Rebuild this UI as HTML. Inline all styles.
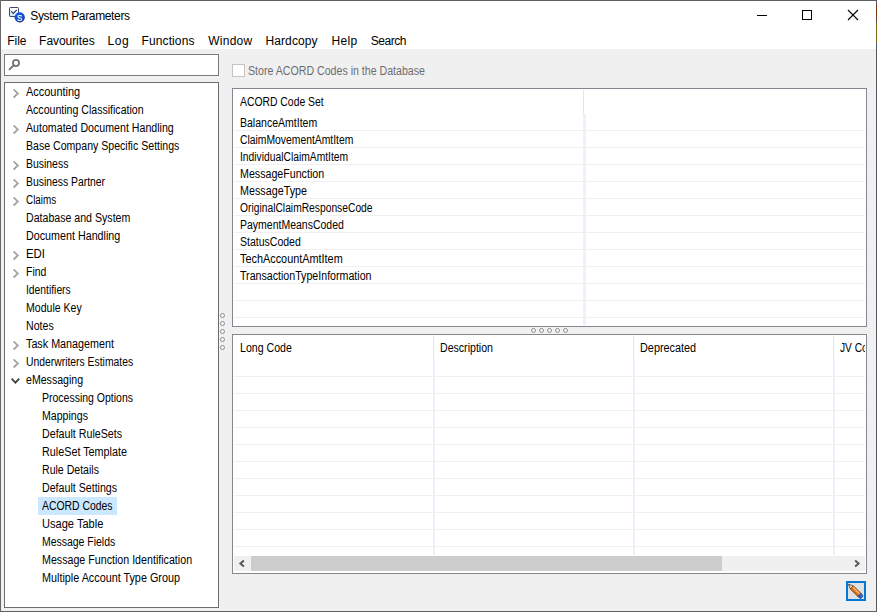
<!DOCTYPE html>
<html><head><meta charset="utf-8"><title>System Parameters</title>
<style>
html,body{margin:0;padding:0}
body{width:877px;height:612px;overflow:hidden;background:#f0f0f0;position:relative;font-family:"Liberation Sans",sans-serif;font-size:11px;color:#000}
div,span{position:absolute;box-sizing:border-box;white-space:nowrap}
svg{position:absolute;overflow:visible}
.t{font-size:12px;line-height:16px;height:16px}
.r{height:18px;line-height:18px;font-size:12px;transform-origin:0 0}
.g{height:17px;line-height:17px;font-size:12px;left:240px;transform-origin:0 0}
.hl{left:234px;width:631px;height:1px;background:#f0f0f0}
.dot{width:5px;height:5px;border:1px solid #8e8e8e;border-radius:50%;background:#f4f4f4}
</style></head><body>
<!-- window frame -->
<div style="left:0;top:0;width:877px;height:49px;background:#fff"></div>
<div style="left:0;top:0;width:877px;height:1px;background:#5e5e5e"></div>
<div style="left:0;top:0;width:1px;height:612px;background:#686868"></div>
<div style="left:876px;top:0;width:1px;height:612px;background:#54585e"></div>
<div style="left:0;top:611px;width:877px;height:1px;background:#606060"></div>
<div style="left:876px;top:4px;width:1px;height:17px;background:#7a3b10"></div>
<div style="left:876px;top:23px;width:1px;height:20px;background:#7d6a10"></div>

<svg style="left:9px;top:7px" width="16" height="16" viewBox="0 0 16 16">
<defs><linearGradient id="cg" x1="0" y1="1" x2="1" y2="0"><stop offset="0" stop-color="#c4e2f8"/><stop offset="0.7" stop-color="#ffffff"/></linearGradient>
<radialGradient id="bg" cx="0.4" cy="0.3" r="0.75"><stop offset="0" stop-color="#1a66e8"/><stop offset="0.7" stop-color="#0a49c8"/><stop offset="1" stop-color="#07276e"/></radialGradient></defs>
<rect x="0.5" y="0.5" width="9" height="9" rx="0.8" fill="url(#cg)" stroke="#36476a" stroke-width="1"/>
<path d="M2.2 4.4 L4.4 6.4 L7.8 2.9" fill="none" stroke="#2a3560" stroke-width="1.15"/>
<circle cx="10.7" cy="10.3" r="5.1" fill="url(#bg)"/>
<text transform="translate(10.75,13.6) scale(0.84,1)" text-anchor="middle" font-family="Liberation Sans, sans-serif" font-size="9.4" fill="#fff" stroke="#fff" stroke-width="0.15">S</text>
</svg>
<div class="t" style="left:30px;top:8px;letter-spacing:-0.350px;margin-left:0.30px">System Parameters</div>
<!-- caption buttons -->
<svg style="left:755px;top:8px" width="120" height="16" viewBox="0 0 120 16">
<path d="M2 7.5 H12" stroke="#000" stroke-width="1" fill="none"/>
<rect x="47.5" y="2.5" width="9" height="9" stroke="#000" stroke-width="1" fill="none"/>
<path d="M93 2 L103 12 M103 2 L93 12" stroke="#000" stroke-width="1.1" fill="none"/>
</svg>

<div class="t" style="left:8px;top:33px;letter-spacing:-0.083px;margin-left:-0.70px">File</div>
<div class="t" style="left:40px;top:33px;letter-spacing:-0.056px;margin-left:-0.90px">Favourites</div>
<div class="t" style="left:108px;top:33px;letter-spacing:0.625px;margin-left:-0.60px">Log</div>
<div class="t" style="left:142px;top:33px;letter-spacing:0.113px;margin-left:-0.50px">Functions</div>
<div class="t" style="left:208px;top:33px;letter-spacing:0.230px;margin-left:0.30px">Window</div>
<div class="t" style="left:266px;top:33px;letter-spacing:0.093px;margin-left:-0.50px">Hardcopy</div>
<div class="t" style="left:332px;top:33px;letter-spacing:0.350px;margin-left:-0.50px">Help</div>
<div class="t" style="left:371px;top:33px;letter-spacing:-0.470px;margin-left:-0.20px">Search</div>

<div style="left:4px;top:54px;width:215px;height:22px;background:#fff;border:1px solid #7a7a7a"></div>
<svg style="left:7px;top:57px" width="14" height="14" viewBox="0 0 14 14"><circle cx="9.0" cy="6.0" r="3.05" fill="none" stroke="#757575" stroke-width="1.8"/><path d="M6.8 8.2 L2.0 12.9" stroke="#757575" stroke-width="1.9" fill="none"/></svg>
<!-- tree -->
<div style="left:4px;top:82px;width:215px;height:526px;background:#fff;border:1px solid #6d6d6d"></div>

<svg style="left:12px;top:88px" width="8" height="10" viewBox="0 0 8 10"><path d="M1.6 1.4 L5.8 5.45 L1.6 9.5" fill="none" stroke="#a3a3a3" stroke-width="1.8"/></svg>
<div class="r" style="left:26px;top:83px;transform:scaleX(0.9111);margin-left:0.20px">Accounting</div>
<div class="r" style="left:26px;top:101px;transform:scaleX(0.8814);margin-left:0.20px">Accounting Classification</div>
<svg style="left:12px;top:124px" width="8" height="10" viewBox="0 0 8 10"><path d="M1.6 1.4 L5.8 5.45 L1.6 9.5" fill="none" stroke="#a3a3a3" stroke-width="1.8"/></svg>
<div class="r" style="left:26px;top:119px;transform:scaleX(0.8861);margin-left:0.20px">Automated Document Handling</div>
<div class="r" style="left:26px;top:137px;transform:scaleX(0.8812);margin-left:-0.38px">Base Company Specific Settings</div>
<svg style="left:12px;top:160px" width="8" height="10" viewBox="0 0 8 10"><path d="M1.6 1.4 L5.8 5.45 L1.6 9.5" fill="none" stroke="#a3a3a3" stroke-width="1.8"/></svg>
<div class="r" style="left:26px;top:155px;transform:scaleX(0.8698);margin-left:-0.37px">Business</div>
<svg style="left:12px;top:178px" width="8" height="10" viewBox="0 0 8 10"><path d="M1.6 1.4 L5.8 5.45 L1.6 9.5" fill="none" stroke="#a3a3a3" stroke-width="1.8"/></svg>
<div class="r" style="left:26px;top:173px;transform:scaleX(0.8654);margin-left:-0.37px">Business Partner</div>
<svg style="left:12px;top:196px" width="8" height="10" viewBox="0 0 8 10"><path d="M1.6 1.4 L5.8 5.45 L1.6 9.5" fill="none" stroke="#a3a3a3" stroke-width="1.8"/></svg>
<div class="r" style="left:26px;top:191px;transform:scaleX(0.8224);margin-left:-0.51px">Claims</div>
<div class="r" style="left:26px;top:209px;transform:scaleX(0.8834);margin-left:-0.38px">Database and System</div>
<div class="r" style="left:26px;top:227px;transform:scaleX(0.8945);margin-left:-0.39px">Document Handling</div>
<svg style="left:12px;top:250px" width="8" height="10" viewBox="0 0 8 10"><path d="M1.6 1.4 L5.8 5.45 L1.6 9.5" fill="none" stroke="#a3a3a3" stroke-width="1.8"/></svg>
<div class="r" style="left:26px;top:245px;transform:scaleX(0.9500);margin-left:-0.45px">EDI</div>
<svg style="left:12px;top:268px" width="8" height="10" viewBox="0 0 8 10"><path d="M1.6 1.4 L5.8 5.45 L1.6 9.5" fill="none" stroke="#a3a3a3" stroke-width="1.8"/></svg>
<div class="r" style="left:26px;top:263px;transform:scaleX(0.8698);margin-left:-0.37px">Find</div>
<div class="r" style="left:26px;top:281px;transform:scaleX(0.8594);margin-left:-0.36px">Identifiers</div>
<div class="r" style="left:26px;top:299px;transform:scaleX(0.8787);margin-left:-0.38px">Module Key</div>
<div class="r" style="left:26px;top:317px;transform:scaleX(0.8833);margin-left:-0.38px">Notes</div>
<svg style="left:12px;top:340px" width="8" height="10" viewBox="0 0 8 10"><path d="M1.6 1.4 L5.8 5.45 L1.6 9.5" fill="none" stroke="#a3a3a3" stroke-width="1.8"/></svg>
<div class="r" style="left:26px;top:335px;transform:scaleX(0.8972);margin-left:0.08px">Task Management</div>
<svg style="left:12px;top:358px" width="8" height="10" viewBox="0 0 8 10"><path d="M1.6 1.4 L5.8 5.45 L1.6 9.5" fill="none" stroke="#a3a3a3" stroke-width="1.8"/></svg>
<div class="r" style="left:26px;top:353px;transform:scaleX(0.8637);margin-left:-0.36px">Underwriters Estimates</div>
<svg style="left:10px;top:377px" width="11" height="8" viewBox="0 0 11 8"><path d="M1.6 1.6 L5.4 5.6 L9.2 1.6" fill="none" stroke="#404040" stroke-width="1.8"/></svg>
<div class="r" style="left:26px;top:371px;transform:scaleX(0.8819);margin-left:-0.44px">eMessaging</div>
<div class="r" style="left:42px;top:389px;transform:scaleX(0.8751);margin-left:-0.28px">Processing Options</div>
<div class="r" style="left:42px;top:407px;transform:scaleX(0.8832);margin-left:-0.38px">Mappings</div>
<div class="r" style="left:42px;top:425px;transform:scaleX(0.8893);margin-left:-0.39px">Default RuleSets</div>
<div class="r" style="left:42px;top:443px;transform:scaleX(0.8989);margin-left:-0.40px">RuleSet Template</div>
<div class="r" style="left:42px;top:461px;transform:scaleX(0.8806);margin-left:-0.38px">Rule Details</div>
<div class="r" style="left:42px;top:479px;transform:scaleX(0.8865);margin-left:-0.39px">Default Settings</div>
<div style="left:38px;top:497px;width:79px;height:18px;background:#cce8ff"></div>
<div class="r" style="left:42px;top:497px;transform:scaleX(0.8667);margin-left:0.20px">ACORD Codes</div>
<div class="r" style="left:42px;top:515px;transform:scaleX(0.9231);margin-left:-0.42px">Usage Table</div>
<div class="r" style="left:42px;top:533px;transform:scaleX(0.8715);margin-left:-0.37px">Message Fields</div>
<div class="r" style="left:42px;top:551px;transform:scaleX(0.8892);margin-left:-0.39px">Message Function Identification</div>
<div class="r" style="left:42px;top:569px;transform:scaleX(0.9002);margin-left:-0.40px">Multiple Account Type Group</div>
<div class="dot" style="left:220px;top:313px"></div>
<div class="dot" style="left:220px;top:321px"></div>
<div class="dot" style="left:220px;top:329px"></div>
<div class="dot" style="left:220px;top:337px"></div>
<div class="dot" style="left:220px;top:345px"></div>

<div style="left:232px;top:64px;width:13px;height:13px;border:1px solid #c4c4c4;background:#fff"></div>
<div class="r" style="left:248px;top:62px;color:#6d6d6d;transform:scaleX(0.8844);margin-left:-0.24px">Store ACORD Codes in the Database</div>
<!-- top grid -->
<div style="left:232px;top:88px;width:635px;height:239px;background:#fff;border:1px solid #828790"></div>
<div style="left:583px;top:90px;width:1px;height:24px;background:#e5e5e5"></div>
<div style="left:583px;top:114px;width:3px;height:211px;background:#ebf2fb"></div>
<div class="g" style="top:94px;transform:scaleX(0.8651);margin-left:0.20px">ACORD Code Set</div>

<div class="g" style="top:115px;transform:scaleX(0.8765);margin-left:-0.38px">BalanceAmtItem</div>
<div class="g" style="top:132px;transform:scaleX(0.8631);margin-left:-0.43px">ClaimMovementAmtItem</div>
<div class="g" style="top:149px;transform:scaleX(0.8579);margin-left:-0.36px">IndividualClaimAmtItem</div>
<div class="g" style="top:166px;transform:scaleX(0.8882);margin-left:-0.39px">MessageFunction</div>
<div class="g" style="top:183px;transform:scaleX(0.8969);margin-left:-0.40px">MessageType</div>
<div class="g" style="top:200px;transform:scaleX(0.8566);margin-left:-0.23px">OriginalClaimResponseCode</div>
<div class="g" style="top:217px;transform:scaleX(0.8744);margin-left:-0.37px">PaymentMeansCoded</div>
<div class="g" style="top:234px;transform:scaleX(0.8765);margin-left:-0.14px">StatusCoded</div>
<div class="g" style="top:251px;transform:scaleX(0.9060);margin-left:0.07px">TechAccountAmtItem</div>
<div class="g" style="top:268px;transform:scaleX(0.8869);margin-left:0.08px">TransactionTypeInformation</div>
<div class="hl" style="top:130px"></div>
<div class="hl" style="top:147px"></div>
<div class="hl" style="top:164px"></div>
<div class="hl" style="top:181px"></div>
<div class="hl" style="top:198px"></div>
<div class="hl" style="top:215px"></div>
<div class="hl" style="top:232px"></div>
<div class="hl" style="top:249px"></div>
<div class="hl" style="top:266px"></div>
<div class="hl" style="top:283px"></div>
<div class="hl" style="top:300px"></div>
<div class="hl" style="top:317px"></div>
<div class="dot" style="left:531px;top:328px"></div>
<div class="dot" style="left:539px;top:328px"></div>
<div class="dot" style="left:547px;top:328px"></div>
<div class="dot" style="left:555px;top:328px"></div>
<div class="dot" style="left:563px;top:328px"></div>

<div style="left:232px;top:334px;width:635px;height:240px;background:#fff;border:1px solid #828790"></div>

<div style="left:433px;top:336px;width:1px;height:24px;background:#e5e5e5"></div>
<div style="left:433px;top:360px;width:2px;height:195px;background:#e9f1fb"></div>
<div style="left:633px;top:336px;width:1px;height:24px;background:#e5e5e5"></div>
<div style="left:633px;top:360px;width:2px;height:195px;background:#e9f1fb"></div>
<div style="left:833px;top:336px;width:1px;height:24px;background:#e5e5e5"></div>
<div style="left:833px;top:360px;width:2px;height:195px;background:#e9f1fb"></div>
<div class="hl" style="top:376px"></div>
<div class="hl" style="top:393px"></div>
<div class="hl" style="top:410px"></div>
<div class="hl" style="top:427px"></div>
<div class="hl" style="top:444px"></div>
<div class="hl" style="top:461px"></div>
<div class="hl" style="top:478px"></div>
<div class="hl" style="top:495px"></div>
<div class="hl" style="top:512px"></div>
<div class="hl" style="top:529px"></div>
<div class="hl" style="top:546px"></div>
<div class="g" style="left:240px;top:340px;transform:scaleX(0.8821);margin-left:-0.28px">Long Code</div>
<div class="g" style="left:440px;top:340px;transform:scaleX(0.8824);margin-left:-0.08px">Description</div>
<div class="g" style="left:640px;top:340px;transform:scaleX(0.9046);margin-left:-0.00px">Deprecated</div>
<div style="left:840px;top:340px;width:25px;height:17px;overflow:hidden"><span class="g" style="left:0;top:0;transform:scaleX(0.85)">JV Code</span></div>

<div style="left:234px;top:556px;width:631px;height:15px;background:#f0f0f0"></div>
<div style="left:251px;top:556px;width:471px;height:15px;background:#cdcdcd"></div>
<svg style="left:238px;top:559px" width="8" height="9" viewBox="0 0 8 9"><path d="M5.9 1.5 L2.4 4.5 L5.9 7.5" fill="none" stroke="#585858" stroke-width="2"/></svg>
<svg style="left:853px;top:559px" width="8" height="9" viewBox="0 0 8 9"><path d="M2.1 1.5 L5.6 4.5 L2.1 7.5" fill="none" stroke="#585858" stroke-width="2"/></svg>
<!-- pencil button -->
<div style="left:846px;top:581px;width:20px;height:20px;background:#e1e1e1;border:2px solid #0078d7"></div>
<svg style="left:846px;top:581px" width="20" height="20" viewBox="0 0 20 20">
<g transform="translate(2.4,3.1) rotate(44.3)">
<path d="M0 0 L4.8 -2.15 L4.8 2.15 Z" fill="#fbe3b5" stroke="#3a3a3a" stroke-width="0.7"/>
<path d="M-0.2 0 L2.2 -1.05 L2.2 1.05 Z" fill="#6a6a6a"/>
<rect x="4.8" y="-2.15" width="10.6" height="4.3" fill="#f47b16" stroke="#2a2a2a" stroke-width="0.75"/>
<rect x="5.2" y="-1.6" width="9.9" height="1.4" fill="#ffb86b"/>
<rect x="5.2" y="0.8" width="9.9" height="1" fill="#d85f08"/>
<path d="M15.4 -2.15 H17.6 Q19.1 -2.15 19.1 0 Q19.1 2.15 17.6 2.15 H15.4 Z" fill="#3170d3" stroke="#1b3d7a" stroke-width="0.7"/>
<rect x="15.8" y="0.5" width="2.6" height="1.3" fill="#1f4fa5"/>
</g></svg>

</body></html>
